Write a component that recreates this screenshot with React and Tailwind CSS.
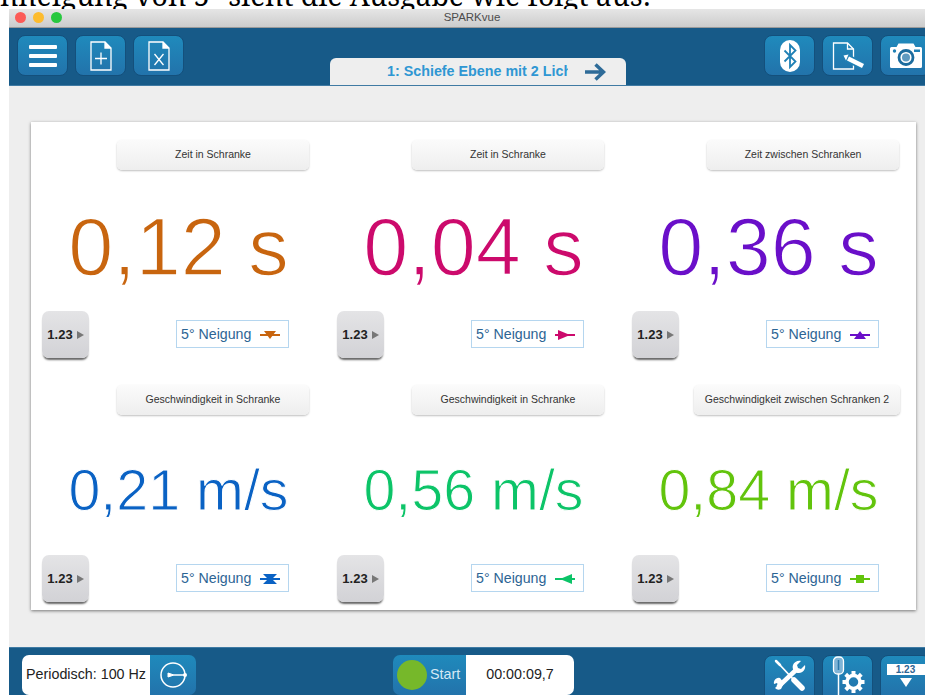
const ZELLEN = [
  { titel: "Zeit in Schranke", wert: "0,12 s", farbe: "text-[#c8650f]", hex: "#c8650f", form: "unten", gross: true },
  { titel: "Zeit in Schranke", wert: "0,04 s", farbe: "text-[#cc0a6c]", hex: "#cc0a6c", form: "rechts", gross: true },
  { titel: "Zeit zwischen Schranken", wert: "0,36 s", farbe: "text-[#6a0fc9]", hex: "#6a0fc9", form: "oben", gross: true },
  { titel: "Geschwindigkeit in Schranke", wert: "0,21 m/s", farbe: "text-[#0a62c4]", hex: "#0a62c4", form: "beide", gross: false },
  { titel: "Geschwindigkeit in Schranke", wert: "0,56 m/s", farbe: "text-[#0cc468]", hex: "#0cc468", form: "links", gross: false },
  { titel: "Geschwindigkeit zwischen Schranken 2", wert: "0,84 m/s", farbe: "text-[#62c40c]", hex: "#62c40c", form: "quadrat", gross: false, breit: true },
];

const ZAEHNE = [0, 45, 90, 135, 180, 225, 270, 315];

// kleine Datenlauf-Markierung: Linie mit Symbol in der Mitte
const Marker = ({ form, hex }) => (
  <svg width="20" height="12" viewBox="0 0 20 12" className="shrink-0">
    <rect x="0" y="5" width="20" height="2" fill={hex} />
    {form === "unten" && <path d="M4 2h12l-6 8z" fill={hex} />}
    {form === "oben" && <path d="M4 10h12l-6-8z" fill={hex} />}
    {form === "rechts" && <path d="M3 1L15 6 3 11z" fill={hex} />}
    {form === "links" && <path d="M17 1L5 6l12 5z" fill={hex} />}
    {form === "beide" && <path d="M3 1h14l-5 5 5 5H3l5-5z" fill={hex} />}
    {form === "quadrat" && <rect x="6" y="2" width="8" height="8" fill={hex} />}
  </svg>
);

const Zelle = ({ titel, wert, farbe, hex, form, gross, breit }) => (
  <div className="flex flex-col w-[295px]">
    <div className={`h-[30px] shrink-0 rounded-[5px] bg-gradient-to-b from-[#fbfbfb] to-[#eeeeee] shadow-[0_1px_2px_rgba(0,0,0,0.25)] flex items-center justify-center text-[10.5px] text-[#333] whitespace-nowrap ${breit ? "ml-[62px] w-[206px]" : "ml-[75px] w-[192px]"}`}>
      {titel}
    </div>
    <div className={`flex items-center justify-center pr-[22px] font-['Liberation_Sans'] whitespace-nowrap ${farbe} ${gross ? "h-[141px] pt-[14px] text-[81px] [-webkit-text-stroke:1.5px_white]" : "h-[140px] pt-[10px] text-[57.4px] [-webkit-text-stroke:1px_white]"}`}>
      {wert}
    </div>
    <div className="flex items-start h-[47px]">
      <div className="w-[47px] h-[47px] rounded-[7px] bg-gradient-to-b from-[#e4e4e6] to-[#d2d2d6] shadow-[0_3px_2px_-1px_rgba(0,0,0,0.6)] flex items-center justify-center gap-[4px]">
        <span className="text-[13px] font-bold text-[#222]">1.23</span>
        <span className="w-0 h-0 border-y-[4px] border-y-transparent border-l-[7px] border-l-[#777]" />
      </div>
      <div className="ml-[87px] mt-[9px] w-[113px] h-[28px] border border-[#b5d6ef] flex items-center pl-[4px] pt-[1px] gap-[9px] text-[14.2px] text-[#2d6594] whitespace-nowrap">
        5° Neigung
        <Marker form={form} hex={hex} />
      </div>
    </div>
  </div>
);

const Knopf = ({ children, className = "" }) => (
  <div className={`w-[51px] h-[41px] shrink-0 rounded-[8px] border border-[#14507c] bg-gradient-to-b from-[#1f8abc] to-[#2273ab] flex items-center justify-center ${className}`}>
    {children}
  </div>
);

const Dokument = ({ children }) => (
  <svg width="24" height="30" viewBox="0 0 24 30" fill="none" stroke="white" strokeWidth="1.3">
    <path d="M2 1h14l6 6v22H2z" />
    <path d="M16 1v6h6" fill="white" />
    {children}
  </svg>
);

export default function App() {
  return (
    <div className="w-[925px] h-[695px] overflow-hidden bg-white font-['Liberation_Sans',sans-serif]">
      {/* angeschnittene Textzeile über dem Fenster */}
      <div className="h-[9px] overflow-hidden flex items-end font-['Noto_Serif','DejaVu_Serif',serif] text-[28.4px] leading-none text-black whitespace-nowrap">
        <span>nneigung von 5° sieht die Ausgabe wie folgt aus:</span>
      </div>

      <div className="ml-[9px] w-[916px] h-[686px] flex flex-col">
        {/* Titelleiste */}
        <div className="relative h-[19px] shrink-0 bg-gradient-to-b from-[#e6e6e6] to-[#cccccc] border-b border-[#9a9a9a] flex items-center justify-center pl-[10px] text-[11.5px] text-[#4c4c4c]">
          <div className="absolute left-[6px] top-[3px] flex gap-[7px]">
            <span className="w-[11px] h-[11px] rounded-full bg-[#fc5b57]" />
            <span className="w-[11px] h-[11px] rounded-full bg-[#fdbc2e]" />
            <span className="w-[11px] h-[11px] rounded-full bg-[#28c83f]" />
          </div>
          SPARKvue
        </div>

        {/* Werkzeugleiste oben */}
        <div className="h-[58px] shrink-0 bg-[#175a88] border-b border-[#3f7aa3] flex">
          <div className="ml-[8px] mt-[7px] flex gap-[7px] shrink-0">
            <Knopf>
              <div className="flex flex-col gap-[5px]">
                <span className="block w-[28px] h-[4px] bg-white rounded-[1px]" />
                <span className="block w-[28px] h-[4px] bg-white rounded-[1px]" />
                <span className="block w-[28px] h-[4px] bg-white rounded-[1px]" />
              </div>
            </Knopf>
            <Knopf>
              <Dokument>
                <path d="M12 11.5v12M6 17.5h12" />
              </Dokument>
            </Knopf>
            <Knopf>
              <Dokument>
                <path d="M7.5 13l9 11M16.5 13l-9 11" />
              </Dokument>
            </Knopf>
          </div>

          <div className="ml-[146px] mt-[30px] w-[296px] h-[27px] shrink-0 rounded-t-[6px] bg-[#eeeeee] flex items-center pl-[57px] gap-[17px]">
            <span className="w-[181px] overflow-hidden whitespace-nowrap text-[14.3px] font-bold text-[#2f97d3]">
              1: Schiefe Ebene mit 2 Lichtschranken
            </span>
            <svg width="21" height="18" viewBox="0 0 21 18" fill="none" stroke="#2e6b98" strokeWidth="3.5">
              <path d="M0 9h18M10.5 1.5L18.500 9l-8 7.500" />
            </svg>
          </div>

          <div className="ml-[138px] mt-[7px] flex gap-[7px] shrink-0">
            <Knopf>
              <svg width="20" height="32" viewBox="0 0 20 32">
                <rect x="0" y="0" width="20" height="32" rx="10" fill="white" />
                <path d="M4.5 10.5l11 11-5.5 5.500V5l5.500 5.500-11 11" fill="none" stroke="#1f80b5" strokeWidth="1.8" />
              </svg>
            </Knopf>
            <Knopf>
              <svg width="32" height="28" viewBox="0 0 32 28" fill="none" stroke="white" strokeWidth="1.3">
                <path d="M1.500 1h14l6 6v20h-20z" />
                <path d="M15.500 1v6h6" />
                <path d="M15 16l16 8" stroke="#2080b5" strokeWidth="8" />
                <path d="M16 16.500l15 7.500" strokeWidth="4.500" />
                <path d="M11.500 13.500l5-1-2.500 6z" fill="white" stroke="none" />
              </svg>
            </Knopf>
            <Knopf>
              <svg width="32" height="25" viewBox="0 0 32 25">
                <path d="M1.500 4h5l2-3.500h15l2 3.500h5a1.500 1.500 0 0 1 1.500 1.500v18a1.500 1.500 0 0 1-1.500 1.500h-29a1.500 1.500 0 0 1-1.500-1.500v-18a1.500 1.500 0 0 1 1.500-1.500z" fill="white" />
                <circle cx="4.500" cy="8" r="1.700" fill="#2080b5" />
                <rect x="24" y="6.500" width="6" height="2.500" fill="#2080b5" />
                <circle cx="16" cy="14.500" r="7" fill="none" stroke="#1c6c9e" strokeWidth="2.800" />
                <circle cx="16" cy="14.500" r="4" fill="#5f9ac0" />
              </svg>
            </Knopf>
          </div>
        </div>

        {/* Anzeigebereich */}
        <div className="h-[561px] shrink-0 bg-[#eeeeee] pt-[36px] pl-[22px]">
          <div className="w-[885px] h-[488px] bg-white shadow-[0_1px_3px_rgba(0,0,0,0.5)] pt-[18px] pl-[11px]">
            <div className="grid grid-cols-[repeat(3,295px)] gap-y-[27px]">
              {ZELLEN.map((z, i) => (
                <Zelle key={i} {...z} />
              ))}
            </div>
          </div>
        </div>

        {/* Leiste unten */}
        <div className="flex-1 bg-[#175a88] border-t border-[#3f7aa3] flex pt-[7px]">
          <div className="ml-[13px] w-[174px] h-[40px] shrink-0 rounded-[7px] overflow-hidden flex">
            <div className="w-[128px] bg-white flex items-center justify-center text-[14.3px] text-[#222] whitespace-nowrap">
              Periodisch: 100 Hz
            </div>
            <div className="flex-1 bg-gradient-to-b from-[#1f8abc] to-[#2273ab] flex items-center justify-center">
              <svg width="30" height="30" viewBox="0 0 30 30" fill="none" stroke="white">
                <circle cx="15" cy="15" r="12" strokeWidth="1.500" />
                <path d="M10 13L16 15 10 17z" fill="white" strokeWidth="1" />
                <path d="M16 15h11" strokeWidth="1.500" />
                <circle cx="27" cy="15" r="2" fill="white" stroke="none" />
              </svg>
            </div>
          </div>

          <div className="ml-[197px] w-[181px] h-[40px] shrink-0 rounded-[7px] overflow-hidden flex">
            <div className="w-[73px] bg-gradient-to-b from-[#1f8abc] to-[#2273ab] flex items-center pl-[4px] gap-[3px] text-[14.3px] text-[#d5e9f5]">
              <span className="w-[30px] h-[30px] rounded-full bg-[#76b82a] shrink-0" />
              Start
            </div>
            <div className="flex-1 bg-white flex items-center justify-center text-[14.3px] text-[#222]">
              00:00:09,7
            </div>
          </div>

          <div className="ml-[190px] flex gap-[7px] shrink-0">
            <Knopf className="rounded-b-none">
              <svg width="34" height="34" viewBox="0 0 34 34" fill="none" stroke="white" strokeLinecap="round">
                <path d="M3 2l4 4" strokeWidth="2.500" />
                <path d="M6 5l14 15" strokeWidth="1.800" />
                <path d="M21 21l8 8" strokeWidth="5.500" />
                <path d="M23 11L6 27" strokeWidth="4.500" />
                <path d="M26 14a6 6 0 0 1-6-8c1-3 5-5 8-4l-4 4 1 3 3 1 4-4c1 4-2 8-6 8z" fill="white" stroke="none" />
                <path d="M8 30a5 5 0 0 1-6-1l3-3-1-2-3 1a5 5 0 0 1 6-6l4 5z" fill="white" stroke="none" />
              </svg>
            </Knopf>
            <Knopf className="rounded-b-none">
              {/* Messfühler mit Zahnrad */}
              <svg width="34" height="39" viewBox="0 0 34 39">
                <rect x="2.500" y="1" width="10" height="17" rx="4" fill="#7fb4d6" stroke="white" strokeWidth="1.300" />
                <path d="M7.500 4v10" stroke="#2a78ab" strokeWidth="1.500" />
                <path d="M7.500 18v21" stroke="white" strokeWidth="1.500" />
                <circle cx="22.500" cy="26" r="6.500" fill="none" stroke="white" strokeWidth="3.500" />
                {ZAEHNE.map((w) => (
                  <rect key={w} x="20.500" y="15" width="4" height="4" fill="white" transform={`rotate(${w} 22.500 26)`} />
                ))}
              </svg>
            </Knopf>
            <Knopf className="rounded-b-none">
              <div className="flex flex-col items-center">
                <div className="w-[38px] h-[11px] bg-white flex items-center justify-center text-[10px] font-bold text-[#2d6594] leading-none">
                  1.23
                </div>
                <span className="mt-[3px] w-0 h-0 border-x-[6px] border-x-transparent border-t-[9px] border-t-white" />
              </div>
            </Knopf>
          </div>
        </div>
      </div>
    </div>
  );
}
